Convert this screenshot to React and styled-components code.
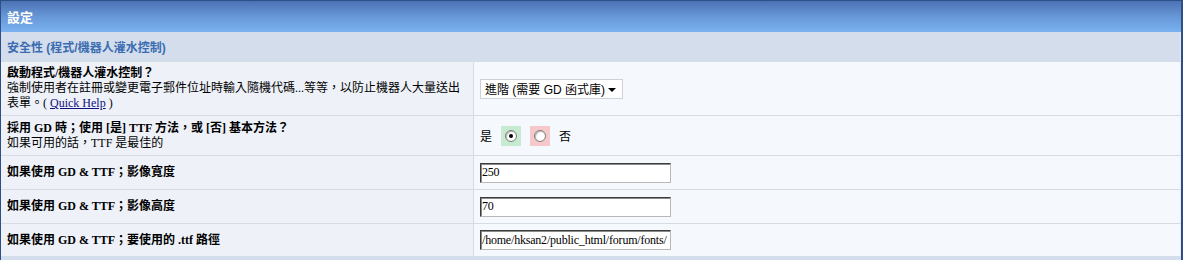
import React from 'react';
import styled, { createGlobalStyle } from 'styled-components';

const GlobalStyle = createGlobalStyle`
  html, body {
    margin: 0;
    padding: 0;
    background: #ffffff;
  }
  body {
    font-family: "Liberation Serif", "Noto Sans CJK TC", serif;
    font-size: 12px;
  }
`

const StyledPanel = styled.div`
  border: 1px solid #2d4f86;
  border-right-width: 2px;
  border-bottom: none;
  background-color: #d3dceb;
  display: flex;
  flex-direction: column;
`
const StyledHeader = styled.div`
  height: 31px;
  display: flex;
  align-items: center;
  padding-left: 6px;
  font-family: "Noto Sans CJK TC", sans-serif;
  font-weight: 700;
  font-size: 13px;
  color: #ffffff;
  background: linear-gradient(to bottom, #4c72b4 0%, #6797d6 50%, #7ab2ef 100%);
`
const StyledSection = styled.div`
  height: 29px;
  display: flex;
  align-items: center;
  padding-left: 6px;
  font-family: "Liberation Sans", "Noto Sans CJK TC", sans-serif;
  font-weight: 700;
  font-size: 12px;
  color: #3b6cb1;
  background-color: #d3ddeb;
  border-right: 1px solid #e4eaf2;
`
const StyledRows = styled.div`
  display: flex;
  flex-direction: column;
  gap: 1px;
  padding-top: 1px;
  background-color: #d6dce4;
`
const StyledRow = styled.div`
  display: grid;
  grid-template-columns: 472px 1fr;
  gap: 1px;
  min-height: ${props => props.height}px;
`
const StyledLabel = styled.div`
  background-color: #eef2f8;
  padding: 0 6px;
  display: flex;
  flex-direction: column;
  justify-content: center;
  line-height: 15px;
  color: #000000;
`
const StyledTitle = styled.div`
  font-weight: 700;
`
const StyledDesc = styled.div`
  font-weight: 400;
`
const StyledLink = styled.a`
  color: #0f0f80;
  text-decoration: underline;
  font-family: "Liberation Serif", serif;
`
const StyledValue = styled.div`
  background-color: #f5f8fc;
  padding: 0 6px;
  display: flex;
  align-items: center;
  gap: 9px;
  border-right: 1px solid #e6ebf2;
`
const StyledSelect = styled.div`
  width: 143px;
  height: 20px;
  box-sizing: border-box;
  border: 1px solid #cdd2d8;
  background: #ffffff;
  display: flex;
  align-items: center;
  justify-content: space-between;
  padding: 0 6px 0 4px;
  font-family: "Liberation Sans", "Noto Sans CJK TC", sans-serif;
  font-size: 12px;
  color: #000000;
`
const StyledArrow = styled.span`
  width: 0;
  height: 0;
  border-left: 4px solid transparent;
  border-right: 4px solid transparent;
  border-top: 4px solid #000000;
  margin-top: 2px;
`
const StyledChoice = styled.span`
  font-family: "Noto Sans CJK TC", sans-serif;
  font-size: 12px;
`
const StyledRadioBox = styled.span`
  width: 20px;
  height: 20px;
  display: flex;
  align-items: center;
  justify-content: center;
  background-color: ${props => props.bg};
`
const StyledRadio = styled.span`
  width: 10px;
  height: 10px;
  border-radius: 50%;
  border: 1px solid #7a7a7a;
  background: #ffffff;
  box-shadow: inset 1px 1px 1px #b8b8b8;
  display: flex;
  align-items: center;
  justify-content: center;
  &::after {
    content: '';
    width: 4px;
    height: 4px;
    border-radius: 50%;
    background: ${props => props.checked ? '#000000' : 'transparent'};
  }
`
const StyledInput = styled.input`
  width: 191px;
  height: 20px;
  box-sizing: border-box;
  margin: 0;
  padding: 0 1px;
  border: 1px solid;
  border-color: #3c3c3c #b8b8b8 #b8b8b8 #3c3c3c;
  box-shadow: inset 1px 1px 0 #8a8a8a;
  background: #ffffff;
  font-family: "Liberation Serif", serif;
  font-size: 12px;
  letter-spacing: -0.2px;
  color: #000000;
  outline: none;
`
const StyledFooter = styled.div`
  height: 12px;
  background-color: #d3ddeb;
`

function App() {
  return (
    <>
      <GlobalStyle />
      <StyledPanel>
        <StyledHeader>設定</StyledHeader>
        <StyledSection>安全性 (程式/機器人灌水控制)</StyledSection>
        <StyledRows>
          <StyledRow height={53}>
            <StyledLabel>
              <StyledTitle>啟動程式/機器人灌水控制？</StyledTitle>
              <StyledDesc>強制使用者在註冊或變更電子郵件位址時輸入隨機代碼...等等，以防止機器人大量送出</StyledDesc>
              <StyledDesc>表單。( <StyledLink href="#">Quick Help</StyledLink> )</StyledDesc>
            </StyledLabel>
            <StyledValue>
              <StyledSelect>
                <span>進階 (需要 GD 函式庫)</span>
                <StyledArrow />
              </StyledSelect>
            </StyledValue>
          </StyledRow>
          <StyledRow height={39}>
            <StyledLabel>
              <StyledTitle>採用 GD 時；使用 [是] TTF 方法，或 [否] 基本方法？</StyledTitle>
              <StyledDesc>如果可用的話，TTF 是最佳的</StyledDesc>
            </StyledLabel>
            <StyledValue>
              <StyledChoice>是</StyledChoice>
              <StyledRadioBox bg="#c7ebd0"><StyledRadio checked /></StyledRadioBox>
              <StyledRadioBox bg="#f5c9c9"><StyledRadio /></StyledRadioBox>
              <StyledChoice>否</StyledChoice>
            </StyledValue>
          </StyledRow>
          <StyledRow height={33}>
            <StyledLabel>
              <StyledTitle>如果使用 GD &amp; TTF；影像寬度</StyledTitle>
            </StyledLabel>
            <StyledValue>
              <StyledInput defaultValue="250" />
            </StyledValue>
          </StyledRow>
          <StyledRow height={33}>
            <StyledLabel>
              <StyledTitle>如果使用 GD &amp; TTF；影像高度</StyledTitle>
            </StyledLabel>
            <StyledValue>
              <StyledInput defaultValue="70" />
            </StyledValue>
          </StyledRow>
          <StyledRow height={32}>
            <StyledLabel>
              <StyledTitle>如果使用 GD &amp; TTF；要使用的 .ttf 路徑</StyledTitle>
            </StyledLabel>
            <StyledValue>
              <StyledInput defaultValue="/home/hksan2/public_html/forum/fonts/" />
            </StyledValue>
          </StyledRow>
        </StyledRows>
        <StyledFooter />
      </StyledPanel>
    </>
  );
}

export default App;
